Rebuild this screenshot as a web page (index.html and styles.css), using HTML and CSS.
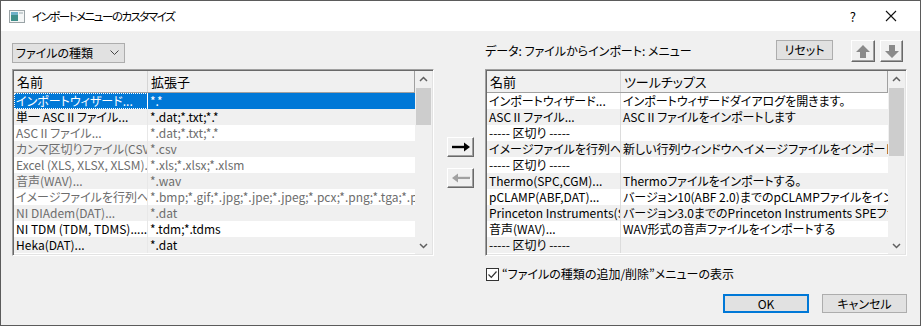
FILE: index.html
```html
<!DOCTYPE html>
<html lang="ja">
<head>
  <meta charset="utf-8">
  <title>インポートメニューのカスタマイズ</title>
  <link rel="stylesheet" href="styles.css">
</head>
<body>
  <div class="window">
    <!-- Title bar -->
    <div class="titlebar">
      <svg class="app-icon" width="16" height="13" viewBox="0 0 16 13">
        <rect x="0.5" y="0.5" width="15" height="12" fill="#f4f6f6" stroke="#9aa3a6"/>
        <rect x="2" y="2" width="7" height="9" fill="#3f8f8a"/>
        <rect x="2" y="2" width="7" height="3" fill="#6fb0c8"/>
        <rect x="10" y="2" width="4" height="2" fill="#c8d0d2"/>
      </svg>
      <span class="title">インポートメニューのカスタマイズ</span>
      <span class="help">?</span>
      <svg class="close" width="12" height="12" viewBox="0 0 12 12">
        <path d="M1 1 L11 11 M11 1 L1 11" stroke="#111" stroke-width="1.1"/>
      </svg>
    </div>

    <div class="content">
      <!-- Left: available file types -->
      <div class="pane left-pane">
        <div class="combo">
          <span>ファイルの種類</span>
          <svg width="9" height="6" viewBox="0 0 9 6"><path d="M0.5 0.5 L4.5 4.5 L8.5 0.5" fill="none" stroke="#444"/></svg>
        </div>
        <div class="list">
          <div class="list-body">
            <div class="list-head">
              <span class="cell">名前</span>
              <span class="cell">拡張子</span>
            </div>
            <div class="row selected"><span class="cell focus">インポートウィザード...</span><span class="cell">*.*</span></div>
            <div class="row alt"><span class="cell">単一 ASCⅡファイル...</span><span class="cell">*.dat;*.txt;*.*</span></div>
            <div class="row off"><span class="cell">ASCⅡファイル...</span><span class="cell">*.dat;*.txt;*.*</span></div>
            <div class="row alt off"><span class="cell">カンマ区切りファイル(CSV)...</span><span class="cell">*.csv</span></div>
            <div class="row off"><span class="cell">Excel (XLS, XLSX, XLSM)...</span><span class="cell">*.xls;*.xlsx;*.xlsm</span></div>
            <div class="row alt off"><span class="cell">音声(WAV)...</span><span class="cell">*.wav</span></div>
            <div class="row off"><span class="cell">イメージファイルを行列へインポート...</span><span class="cell">*.bmp;*.gif;*.jpg;*.jpe;*.jpeg;*.pcx;*.png;*.tga;*.psd;*.tif</span></div>
            <div class="row alt off"><span class="cell">NI DIAdem(DAT)...</span><span class="cell">*.dat</span></div>
            <div class="row"><span class="cell">NI TDM (TDM, TDMS)......</span><span class="cell">*.tdm;*.tdms</span></div>
            <div class="row alt"><span class="cell">Heka(DAT)...</span><span class="cell">*.dat</span></div>
          </div>
          <div class="scrollbar">
            <svg class="sb-arrow" width="17" height="17" viewBox="0 0 17 17"><path d="M5 10 L8.5 6.5 L12 10" fill="none" stroke="#606060" stroke-width="1.5"/></svg>
            <div class="thumb thumb-left"></div>
            <div class="track"></div>
            <svg class="sb-arrow" width="17" height="17" viewBox="0 0 17 17"><path d="M5 7 L8.5 10.5 L12 7" fill="none" stroke="#606060" stroke-width="1.5"/></svg>
          </div>
        </div>
      </div>

      <!-- Middle: add / remove -->
      <div class="middle">
        <div class="raised move-btn">
          <svg width="20" height="12" viewBox="0 0 20 12"><path d="M1 6 H14" stroke="#000" stroke-width="2.4"/><path d="M13 1.5 L19 6 L13 10.5 Z" fill="#000"/></svg>
        </div>
        <div class="raised move-btn">
          <svg width="20" height="12" viewBox="0 0 20 12"><path d="M7 7 H20" stroke="#fff" stroke-width="2"/><path d="M6 6 H19" stroke="#a0a0a0" stroke-width="2.4"/><path d="M7 1.5 L1 6 L7 10.5 Z" fill="#a0a0a0"/></svg>
        </div>
      </div>

      <!-- Right: current menu -->
      <div class="pane right-pane">
        <div class="toolbar">
          <span class="menu-label">データ: ファイルからインポート: メニュー</span>
          <div class="btn reset-btn">リセット</div>
          <div class="raised order-btn up-btn">
            <svg width="14" height="13" viewBox="0 0 14 13"><path d="M7 0 L14 7 H10 V13 H4 V7 H0 Z" fill="#8a8a8a"/></svg>
          </div>
          <div class="raised order-btn down-btn">
            <svg width="14" height="13" viewBox="0 0 14 13"><path d="M7 13 L14 6 H10 V0 H4 V6 H0 Z" fill="#8a8a8a"/></svg>
          </div>
        </div>
        <div class="list">
          <div class="list-body grid-lines">
            <div class="list-head wide">
              <span class="cell">名前</span>
              <span class="cell">ツールチップス</span>
            </div>
            <div class="row"><span class="cell">インポートウィザード...</span><span class="cell">インポートウィザードダイアログを開きます。</span></div>
            <div class="row alt"><span class="cell">ASCⅡファイル...</span><span class="cell">ASCⅡファイルをインポートします</span></div>
            <div class="row"><span class="cell">----- 区切り -----</span><span class="cell"></span></div>
            <div class="row alt"><span class="cell">イメージファイルを行列へインポート</span><span class="cell">新しい行列ウィンドウへイメージファイルをインポート</span></div>
            <div class="row"><span class="cell">----- 区切り -----</span><span class="cell"></span></div>
            <div class="row alt"><span class="cell">Thermo(SPC,CGM)...</span><span class="cell">Thermoファイルをインポートする。</span></div>
            <div class="row"><span class="cell">pCLAMP(ABF,DAT)...</span><span class="cell">バージョン10(ABF 2.0)までのpCLAMPファイルをインポートする</span></div>
            <div class="row alt"><span class="cell">Princeton Instruments(SPE)...</span><span class="cell">バージョン3.0までのPrinceton Instruments SPEファイルをインポート</span></div>
            <div class="row"><span class="cell">音声(WAV)...</span><span class="cell">WAV形式の音声ファイルをインポートする</span></div>
            <div class="row alt"><span class="cell">----- 区切り -----</span><span class="cell"></span></div>
          </div>
          <div class="scrollbar">
            <svg class="sb-arrow" width="17" height="17" viewBox="0 0 17 17"><path d="M5 10 L8.5 6.5 L12 10" fill="none" stroke="#606060" stroke-width="1.5"/></svg>
            <div class="thumb thumb-right"></div>
            <div class="track"></div>
            <svg class="sb-arrow" width="17" height="17" viewBox="0 0 17 17"><path d="M5 7 L8.5 10.5 L12 7" fill="none" stroke="#606060" stroke-width="1.5"/></svg>
          </div>
        </div>

        <label class="check-row">
          <span class="checkbox">
            <svg width="11" height="11" viewBox="0 0 11 11"><path d="M1.5 5.5 L4.3 8.3 L9.5 2.5" fill="none" stroke="#333" stroke-width="1.2"/></svg>
          </span>
          <span>“ファイルの種類の追加/削除”メニューの表示</span>
        </label>

        <div class="dialog-buttons">
          <div class="btn ok-btn">OK</div>
          <div class="btn cancel-btn">キャンセル</div>
        </div>
      </div>
    </div>
  </div>
</body>
</html>
```

FILE: styles.css
```css
* {
  margin: 0;
  padding: 0;
  box-sizing: border-box;
}

body {
  width: 921px;
  height: 326px;
  font-family: "Noto Sans CJK JP", "Noto Sans", sans-serif;
  font-feature-settings: "palt";
  font-size: 12px;
  color: #000;
  background: #f0f0f0;
}

.window {
  width: 921px;
  height: 326px;
  border: 1px solid #5b5b5b;
  display: flex;
  flex-direction: column;
}

/* Title bar */
.titlebar {
  height: 30px;
  background: #fff;
  display: flex;
  align-items: center;
  padding-left: 8px;
}

.app-icon {
  margin-right: 7px;
  margin-top: 1px;
}

.title {
  flex: 1;
  font-size: 11.5px;
  letter-spacing: -1.5px;
  line-height: 16px;
}

.help {
  font-size: 13px;
  margin-right: 29px;
}

.close {
  margin-right: 23px;
}

/* Body */
.content {
  flex: 1;
  display: flex;
  padding: 9px 13px 0 11px;
}

.pane {
  width: 422px;
  display: flex;
  flex-direction: column;
}

.combo {
  width: 113px;
  height: 20px;
  margin-top: 3px;
  margin-bottom: 6px;
  background: #e1e1e1;
  border: 1px solid #adadad;
  display: flex;
  align-items: center;
  justify-content: space-between;
  padding: 0 5px 0 3px;
  line-height: 16px;
}

/* Lists */
.list {
  height: 187px;
  display: flex;
  border: 1px solid;
  border-color: #a0a0a0 #fff #fff #a0a0a0;
  box-shadow: inset 1px 1px #696969, inset -1px -1px #e3e3e3;
  padding: 1px;
  background: #fff;
}

.list-body {
  flex: 1;
  overflow: hidden;
  background: #fff;
}

.list-head {
  display: grid;
  grid-template-columns: 134px 1fr;
  height: 22px;
  background: #f0f0f0;
  border-bottom: 1px solid #a0a0a0;
  border-right: 1px solid #a0a0a0;
}

.list-head .cell {
  line-height: 21px;
  font-size: 13px;
  padding-left: 3px;
  border-right: 1px solid #d5d5d5;
}

.list-head .cell:last-child {
  border-right: none;
}

.row {
  display: grid;
  grid-template-columns: 134px 1fr;
  height: 16px;
  line-height: 16px;
  background: #fff;
}

.row.alt {
  background: #f0f0f0;
}

.row.off {
  color: #6d6d6d;
}

.row.selected {
  background: #0078d7;
  color: #fff;
}

.cell {
  white-space: nowrap;
  overflow: hidden;
  padding-left: 2px;
}

.row .cell:first-child {
  border-right: 1px solid #e8e8e8;
}

.row.selected .cell:first-child {
  border-right-color: #fff;
}

.focus {
  outline: 1px dotted #fff;
  outline-offset: -1px;
}

.grid-lines .row .cell:first-child {
  border-right-color: #dcdcdc;
}

.scrollbar {
  width: 17px;
  background: #f0f0f0;
  display: flex;
  flex-direction: column;
}

.sb-arrow {
  display: block;
  flex-shrink: 0;
}

.thumb {
  margin: 0 1px;
  background: #cdcdcd;
  flex-shrink: 0;
}

.thumb-left {
  height: 37px;
}

.thumb-right {
  height: 68px;
}

.track {
  flex: 1;
}

/* Middle buttons */
.middle {
  width: 51px;
  display: flex;
  flex-direction: column;
  align-items: center;
  gap: 11px;
  padding-top: 97px;
  padding-left: 2px;
}

.raised {
  background: #f0f0f0;
  border: 1px solid;
  border-color: #fff #696969 #696969 #fff;
  box-shadow: inset -1px -1px #a0a0a0;
  display: flex;
  align-items: center;
  justify-content: center;
}

.move-btn {
  width: 27px;
  height: 20px;
}

/* Right pane */
.toolbar {
  height: 22px;
  margin-bottom: 7px;
  display: flex;
  align-items: flex-start;
  padding-right: 4px;
}

.menu-label {
  flex: 1;
  padding-top: 3px;
  line-height: 16px;
}

.btn {
  background: #e1e1e1;
  border: 1px solid #adadad;
  display: flex;
  align-items: center;
  justify-content: center;
  line-height: 16px;
}

.reset-btn {
  width: 57px;
  height: 20px;
  margin-right: 18px;
}

.order-btn {
  height: 22px;
}

.up-btn {
  width: 24px;
  margin-right: 5px;
}

.down-btn {
  width: 23px;
}

.check-row {
  display: flex;
  align-items: center;
  gap: 3px;
  margin-top: 11px;
  margin-left: 1px;
  height: 14px;
  line-height: 16px;
}

.checkbox {
  width: 13px;
  height: 13px;
  border: 1px solid #333;
  background: #fff;
  display: flex;
  align-items: center;
  justify-content: center;
}

.dialog-buttons {
  display: flex;
  justify-content: flex-end;
  gap: 13px;
  margin-top: 13px;
}

.ok-btn {
  width: 86px;
  height: 19px;
  border: 1px solid #0078d7;
  box-shadow: inset 0 0 0 1px #0078d7;
}

.cancel-btn {
  width: 85px;
  height: 19px;
}
```
